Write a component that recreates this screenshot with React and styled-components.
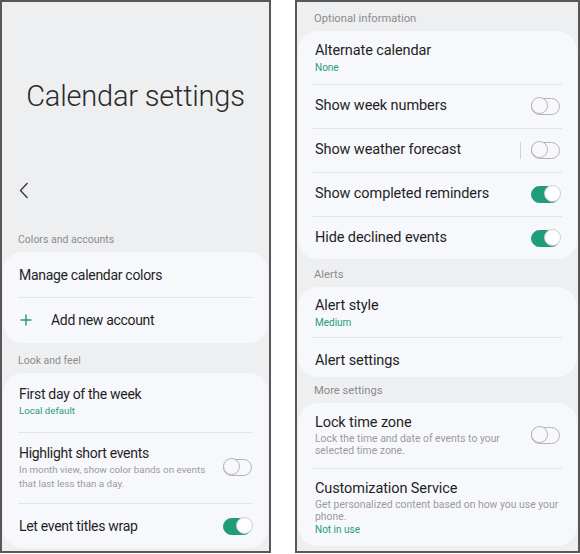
import React from "react";
import styled, { createGlobalStyle } from "styled-components";

const GlobalStyle = createGlobalStyle`
  html, body {
    margin: 0;
    padding: 0;
    background: #ffffff;
  }
  body {
    font-family: Roboto, "Noto Sans", "Liberation Sans", sans-serif;
    color: #222;
  }
`;

const teal = "#1f9c7a";

// the two screenshots were taken at slightly different scales
const sizes = {
  left: { label: "14px", labelLs: "-0.3px", desc: "9.8px", descLh: "14px", sub: "9.7px", head: "10.5px", side: "16px" },
  right: { label: "14.5px", labelLs: "-0.1px", desc: "10.4px", descLh: "12px", sub: "10px", head: "11.2px", side: "17px" },
};

const Page = styled.div`
  display: flex;
  gap: 24px;
  width: 580px;
  height: 554px;
  box-sizing: border-box;
`;

const Panel = styled.div`
  width: ${(p) => p.$width}px;
  height: 553px;
  box-sizing: border-box;
  border: 2px solid #575757;
  background: #eeeff1;
  overflow: hidden;
  display: flex;
  flex-direction: column;
  --label-fs: ${(p) => p.$s.label};
  --label-ls: ${(p) => p.$s.labelLs};
  --desc-fs: ${(p) => p.$s.desc};
  --desc-lh: ${(p) => p.$s.descLh};
  --sub-fs: ${(p) => p.$s.sub};
  --head-fs: ${(p) => p.$s.head};
  --side-pad: ${(p) => p.$s.side};
`;

const Hero = styled.div`
  padding-top: 74px;
  display: flex;
  flex-direction: column;
`;

const BigTitle = styled.h1`
  margin: 0;
  font-weight: 300;
  font-size: 29px;
  line-height: 40px;
  letter-spacing: -0.2px;
  color: #2a2a2a;
  text-align: center;
`;

const BackButton = styled.div`
  margin-top: 64px;
  height: 20px;
  padding-left: 17px;
  display: flex;
  align-items: center;
`;

const SectionHeader = styled.div`
  padding: ${(p) => p.$top ?? 9}px var(--side-pad) 4px;
  font-size: var(--head-fs);
  line-height: 16px;
  color: #8c8c8c;
`;

const Card = styled.div`
  background: #f7f8fb;
  border-radius: 20px;
  margin: 0 1px;
  display: flex;
  flex-direction: column;
`;

const Row = styled.div`
  display: flex;
  align-items: center;
  gap: 12px;
  padding: ${(p) => p.$pad[0]}px var(--side-pad) ${(p) => p.$pad[1]}px;
  position: relative;
  &:not(:first-child)::before {
    content: "";
    position: absolute;
    top: 0;
    left: 15px;
    right: 15px;
    height: 1px;
    background: #e3e4e7;
  }
`;

const RowText = styled.div`
  flex: 1;
  min-width: 0;
  display: flex;
  flex-direction: column;
`;

const Label = styled.div`
  font-size: var(--label-fs);
  letter-spacing: var(--label-ls);
  line-height: 20px;
  color: #1f1f1f;
`;

const Sub = styled.div`
  font-size: var(--sub-fs);
  line-height: 14px;
  color: ${teal};
`;

const Desc = styled.div`
  font-size: var(--desc-fs);
  line-height: var(--desc-lh);
  color: #9b9b9b;
`;

const IconSlot = styled.div`
  width: 19px;
  display: flex;
  align-items: center;
  padding-left: 1px;
`;

const Toggle = styled.div`
  position: relative;
  flex: none;
  width: 29px;
  height: 17px;
  box-sizing: border-box;
  border-radius: 9px;
  border: 1.5px solid ${(p) => (p.$on ? teal : "#b4b4b4")};
  background: ${(p) => (p.$on ? teal : "transparent")};
  &::after {
    content: "";
    position: absolute;
    top: -1.5px;
    ${(p) => (p.$on ? "right: -1.5px;" : "left: -1.5px;")}
    width: 17px;
    height: 17px;
    box-sizing: border-box;
    border-radius: 50%;
    border: 1.5px solid ${(p) => (p.$on ? "#c9cfcc" : "#b4b4b4")};
    background: ${(p) => (p.$on ? "#ffffff" : "#f7f8fb")};
  }
`;

const VSep = styled.div`
  width: 1px;
  height: 17px;
  background: #d2d3d6;
  margin-right: -2px;
`;

const Chevron = () => (
  <svg width="10" height="17" viewBox="0 0 10 17">
    <polyline points="8.5,1 1.5,8.5 8.5,16" fill="none" stroke="#333" strokeWidth="1.3" />
  </svg>
);

const Plus = () => (
  <svg width="12" height="12" viewBox="0 0 12 12">
    <path d="M6 0.5v11M0.5 6h11" stroke={teal} strokeWidth="1.4" />
  </svg>
);

const Setting = ({ label, sub, desc, toggle, icon, sep, pad = [12, 12] }) => (
  <Row $pad={pad}>
    {icon && <IconSlot>{icon}</IconSlot>}
    <RowText>
      <Label>{label}</Label>
      {desc && <Desc>{desc}</Desc>}
      {sub && <Sub>{sub}</Sub>}
    </RowText>
    {sep && <VSep />}
    {toggle !== undefined && <Toggle $on={toggle} />}
  </Row>
);

export default function App() {
  return (
    <>
      <GlobalStyle />
      <Page>
        <Panel $width={271} $s={sizes.left}>
          <Hero>
            <BigTitle>Calendar settings</BigTitle>
            <BackButton>
              <Chevron />
            </BackButton>
          </Hero>
          <SectionHeader $top={32}>Colors and accounts</SectionHeader>
          <Card>
            <Setting label="Manage calendar colors" pad={[13, 12]} />
            <Setting label="Add new account" icon={<Plus />} pad={[13, 13]} />
          </Card>
          <SectionHeader $top={10}>Look and feel</SectionHeader>
          <Card>
            <Setting label="First day of the week" sub="Local default" pad={[11, 14]} />
            <Setting
              label="Highlight short events"
              desc="In month view, show color bands on events that last less than a day."
              toggle={false}
              pad={[11, 12]}
            />
            <Setting label="Let event titles wrap" toggle={true} pad={[13, 12]} />
          </Card>
        </Panel>

        <Panel $width={285} $s={sizes.right}>
          <SectionHeader $top={9}>Optional information</SectionHeader>
          <Card>
            <Setting label="Alternate calendar" sub="None" pad={[10, 9]} />
            <Setting label="Show week numbers" toggle={false} />
            <Setting label="Show weather forecast" toggle={false} sep />
            <Setting label="Show completed reminders" toggle={true} />
            <Setting label="Hide declined events" toggle={true} pad={[12, 11]} />
          </Card>
          <SectionHeader $top={8}>Alerts</SectionHeader>
          <Card>
            <Setting label="Alert style" sub="Medium" pad={[9, 7]} />
            <Setting label="Alert settings" pad={[14, 6]} />
          </Card>
          <SectionHeader $top={6}>More settings</SectionHeader>
          <Card>
            <Setting
              label="Lock time zone"
              desc="Lock the time and date of events to your selected time zone."
              toggle={false}
              pad={[10, 11]}
            />
            <Setting
              label="Customization Service"
              desc="Get personalized content based on how you use your phone."
              sub="Not in use"
              pad={[11, 9]}
            />
          </Card>
        </Panel>
      </Page>
    </>
  );
}
